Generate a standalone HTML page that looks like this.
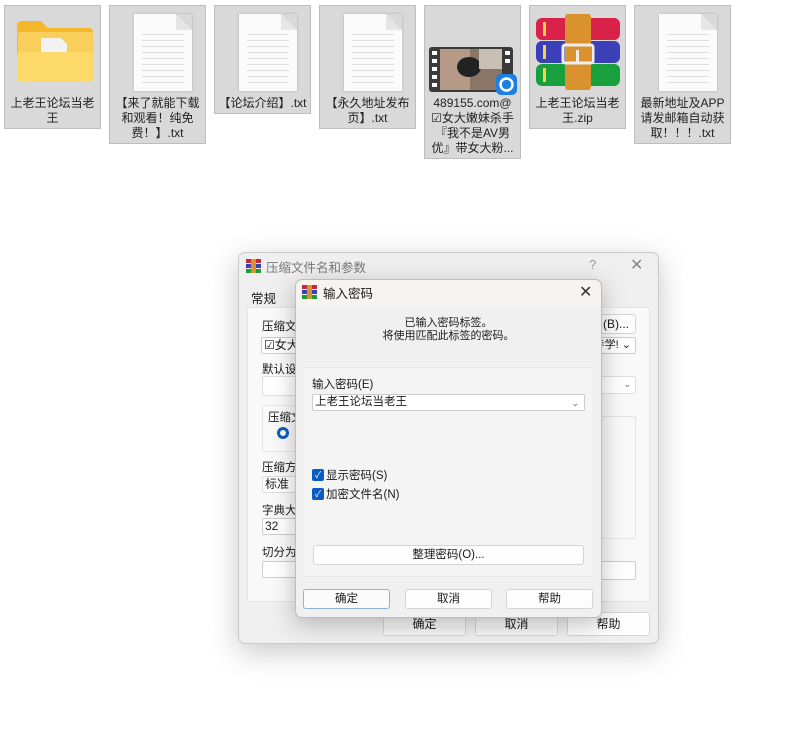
<!DOCTYPE html>
<html><head><meta charset="utf-8">
<style>
*{box-sizing:border-box;margin:0;padding:0}
body{width:800px;height:733px;background:#fff;position:relative;overflow:hidden;font-family:"Liberation Sans","Microsoft YaHei","Noto Sans CJK SC",sans-serif;font-size:12px;color:#1a1a1a}
.a{position:absolute}
.tile{position:absolute;top:5px;width:97px;background:#d9d9d9;border:1px solid #bdbdbd}
.tile .t{position:absolute;top:90px;left:0;width:95px;text-align:center;line-height:15px;font-size:12px;color:#222}
.doc{position:absolute;left:24px;top:8px;width:58px;height:77px;background:#fbfbfb;box-shadow:0 0 2px #aaa}
.doc:before{content:"";position:absolute;right:0;top:0;border-style:solid;border-width:0 16px 16px 0;border-color:#d9d9d9 #d9d9d9 #e6e6e6 #d9d9d9}
.doc i{position:absolute;left:8px;right:8px;height:1px;background:#ddd}
.btn{position:absolute;background:#fdfdfd;border:1px solid #d5d5d5;border-radius:3px;text-align:center;font-size:12px}
.box{position:absolute;background:#fff;border:1px solid #ccc;border-radius:2px}
.lbl{position:absolute;font-size:11.5px;color:#1a1a1a}
.chev{position:absolute;font-size:9px;color:#666}
</style></head><body>

<div class="tile" style="left:4px;height:124px">
 <svg class="a" style="left:10px;top:12px" width="80" height="66" viewBox="0 0 80 66">
  <path d="M2 8 Q2 3 7 3 H26 L33 10 H74 Q78 10 78 15 V60 Q78 64 74 64 H6 Q2 64 2 60Z" fill="#f5b82a"/>
  <rect x="3" y="14" width="75" height="40" rx="3" fill="#f9cf5c"/>
  <path d="M26 20 H46 L52 26 V44 H26Z" fill="#f2f2f2"/>
  <rect x="2" y="34" width="76" height="30" rx="3" fill="#fcd968"/>
 </svg>
 <div class="t">上老王论坛当老<br>王</div>
</div>
<div class="tile" style="left:109px;height:139px"><div class="doc"><i style="top:20px"></i><i style="top:26px"></i><i style="top:32px"></i><i style="top:38px"></i><i style="top:44px"></i><i style="top:50px"></i><i style="top:56px"></i><i style="top:62px"></i><i style="top:68px"></i></div>
 <div class="t">【来了就能下载<br>和观看！纯免<br>费！】.txt</div></div>
<div class="tile" style="left:214px;height:109px"><div class="doc"><i style="top:20px"></i><i style="top:26px"></i><i style="top:32px"></i><i style="top:38px"></i><i style="top:44px"></i><i style="top:50px"></i><i style="top:56px"></i><i style="top:62px"></i><i style="top:68px"></i></div>
 <div class="t">【论坛介绍】.txt</div></div>
<div class="tile" style="left:319px;height:124px"><div class="doc"><i style="top:20px"></i><i style="top:26px"></i><i style="top:32px"></i><i style="top:38px"></i><i style="top:44px"></i><i style="top:50px"></i><i style="top:56px"></i><i style="top:62px"></i><i style="top:68px"></i></div>
 <div class="t">【永久地址发布<br>页】.txt</div></div>
<div class="tile" style="left:424px;height:154px">
 <svg class="a" style="left:4px;top:36px" width="88" height="54" viewBox="0 0 88 54">
  <rect x="0" y="5" width="84" height="45" rx="3" fill="#3a3a3a"/>
  <rect x="11" y="7" width="62" height="41" fill="#8a7566"/>
  <rect x="11" y="7" width="30" height="41" fill="#b69a88"/>
  <ellipse cx="40" cy="25" rx="12" ry="10" fill="#222"/>
  <rect x="50" y="7" width="23" height="20" fill="#c9c0b5"/>
  <g fill="#fff"><rect x="3" y="9" width="5" height="4"/><rect x="3" y="17" width="5" height="4"/><rect x="3" y="25" width="5" height="4"/><rect x="3" y="33" width="5" height="4"/><rect x="3" y="41" width="5" height="4"/><rect x="76" y="9" width="5" height="4"/><rect x="76" y="17" width="5" height="4"/></g>
  <rect x="67" y="32" width="21" height="21" rx="5" fill="#1d7fe6"/>
  <circle cx="77.5" cy="42.5" r="6" fill="none" stroke="#fff" stroke-width="2.5"/>
 </svg>
 <div class="t">489155.com@<br>☑女大嫩妹杀手<br>『我不是AV男<br>优』带女大粉...</div></div>
<div class="tile" style="left:529px;height:124px">
 <svg class="a" style="left:5px;top:8px" width="86" height="76" viewBox="0 0 86 76">
  <rect x="1" y="4" width="84" height="22" rx="6" fill="#d8224a"/>
  <rect x="1" y="27" width="84" height="22" rx="6" fill="#3b3fb8"/>
  <rect x="1" y="50" width="84" height="22" rx="6" fill="#18a03c"/>
  <rect x="8" y="8" width="3" height="14" fill="#f5d24a"/><rect x="8" y="31" width="3" height="14" fill="#f5d24a"/><rect x="8" y="54" width="3" height="14" fill="#f5d24a"/>
  <rect x="30" y="0" width="26" height="76" rx="3" fill="#d9922e"/>
  <rect x="28" y="31" width="30" height="18" rx="2" fill="none" stroke="#eee" stroke-width="3"/>
  <rect x="41" y="36" width="3" height="13" fill="#eee"/>
 </svg>
 <div class="t">上老王论坛当老<br>王.zip</div></div>
<div class="tile" style="left:634px;height:139px"><div class="doc"><i style="top:20px"></i><i style="top:26px"></i><i style="top:32px"></i><i style="top:38px"></i><i style="top:44px"></i><i style="top:50px"></i><i style="top:56px"></i><i style="top:62px"></i><i style="top:68px"></i></div>
 <div class="t">最新地址及APP<br>请发邮箱自动获<br>取！！！.txt</div></div>

<div class="a" style="left:238px;top:252px;width:421px;height:392px;background:#efefef;border:1px solid #c9c9c9;border-radius:7px;box-shadow:0 8px 30px rgba(0,0,0,.22)"></div>
<svg class="a" style="left:246px;top:259px" width="15" height="14"><rect width="15" height="4" fill="#c8283c"/><rect y="5" width="15" height="4" fill="#3a40b0"/><rect y="10" width="15" height="4" fill="#1c9a3c"/><rect x="5" width="5" height="14" fill="#d9922e"/></svg>
<div class="lbl" style="left:266px;top:257px;font-size:12.5px;color:#777">压缩文件名和参数</div>
<div class="lbl" style="left:589px;top:257px;color:#999;font-size:13px">?</div>
<div class="lbl" style="left:630px;top:255px;color:#888;font-size:16px">✕</div>
<div class="lbl" style="left:251px;top:288px;font-size:12.5px">常规</div>
<div class="a" style="left:247px;top:307px;width:403px;height:295px;background:#f9f9f9;border:1px solid #e4e4e4;border-radius:3px"></div>
<div class="lbl" style="left:262px;top:318px">压缩文</div>
<div class="box" style="left:261px;top:337px;width:40px;height:17px;padding-left:2px;line-height:15px">☑女大</div>
<div class="lbl" style="left:262px;top:361px">默认设</div>
<div class="box" style="left:262px;top:376px;width:40px;height:20px;border-color:#ddd"></div>
<div class="a" style="left:262px;top:405px;width:40px;height:47px;border:1px solid #e6e6e6;border-radius:3px"></div>
<div class="lbl" style="left:268px;top:409px">压缩文</div>
<div class="a" style="left:277px;top:427px;width:12px;height:12px;border-radius:50%;border:3.5px solid #0c5fb8;background:#fff"></div>
<div class="lbl" style="left:262px;top:459px">压缩方</div>
<div class="box" style="left:262px;top:476px;width:40px;height:17px;padding-left:2px;line-height:15px;border-color:#ddd">标准</div>
<div class="lbl" style="left:262px;top:502px">字典大</div>
<div class="box" style="left:262px;top:518px;width:40px;height:17px;padding-left:2px;line-height:15px">32</div>
<div class="lbl" style="left:262px;top:544px">切分为</div>
<div class="box" style="left:262px;top:561px;width:40px;height:17px"></div>
<div class="btn" style="left:585px;top:314px;width:51px;height:20px;line-height:18px;text-align:right;padding-right:6px">(B)...</div>
<div class="box" style="left:585px;top:337px;width:51px;height:17px;line-height:15px;text-align:right;padding-right:4px;font-size:11px">寺学! ⌄</div>
<div class="box" style="left:585px;top:376px;width:51px;height:18px;border-color:#ddd"><span class="chev" style="right:4px;top:2px">⌄</span></div>
<div class="a" style="left:590px;top:416px;width:46px;height:123px;border:1px solid #e4e4e4;border-radius:2px"></div>
<div class="box" style="left:585px;top:561px;width:51px;height:19px"></div>
<div class="btn" style="left:383px;top:612px;width:83px;height:24px;line-height:22px;background:#f7f7f7">确定</div>
<div class="btn" style="left:475px;top:612px;width:83px;height:24px;line-height:22px;background:#f7f7f7">取消</div>
<div class="btn" style="left:567px;top:612px;width:83px;height:24px;line-height:22px;background:#fdfdfd">帮助</div>

<div class="a" style="left:295px;top:279px;width:307px;height:339px;background:#f0f0f0;border:1px solid #bdbdbd;border-radius:7px;box-shadow:0 6px 24px rgba(0,0,0,.25)"></div>
<div class="a" style="left:296px;top:280px;width:305px;height:26px;background:#f7f3f1;border-radius:7px 7px 0 0"></div>
<svg class="a" style="left:302px;top:285px" width="15" height="14"><rect width="15" height="4" fill="#c8283c"/><rect y="5" width="15" height="4" fill="#3a40b0"/><rect y="10" width="15" height="4" fill="#1c9a3c"/><rect x="5" width="5" height="14" fill="#d9922e"/></svg>
<div class="lbl" style="left:323px;top:283px;font-size:12.5px">输入密码</div>
<div class="lbl" style="left:579px;top:282px;font-size:16px;color:#333">✕</div>
<div class="lbl" style="left:296px;top:317px;width:305px;text-align:center;font-size:11px;line-height:13px">已输入密码标签。<br>将使用匹配此标签的密码。</div>
<div class="a" style="left:302px;top:367px;width:292px;height:210px;background:#f4f4f4;border:1px solid #e8e8e8;border-radius:2px"></div>
<div class="lbl" style="left:312px;top:376px;font-size:11.5px">输入密码(E)</div>
<div class="box" style="left:312px;top:394px;width:273px;height:17px;padding-left:2px;line-height:15px;font-size:11.5px">上老王论坛当老王<span class="chev" style="right:5px;top:1px">⌄</span></div>
<div class="a" style="left:312px;top:469px;width:12px;height:12px;background:#0a5cc0;border-radius:2px;color:#fff;font-size:9px;text-align:center;line-height:12px">✓</div>
<div class="lbl" style="left:326px;top:467px;font-size:11.5px">显示密码(S)</div>
<div class="a" style="left:312px;top:488px;width:12px;height:12px;background:#0a5cc0;border-radius:2px;color:#fff;font-size:9px;text-align:center;line-height:12px">✓</div>
<div class="lbl" style="left:326px;top:486px;font-size:11.5px">加密文件名(N)</div>
<div class="btn" style="left:313px;top:545px;width:271px;height:20px;line-height:18px;font-size:11.5px">整理密码(O)...</div>
<div class="btn" style="left:303px;top:589px;width:87px;height:20px;line-height:18px;font-size:11.5px;border-color:#8fb4dc;background:#fbfbfb">确定</div>
<div class="btn" style="left:405px;top:589px;width:87px;height:20px;line-height:18px;font-size:11.5px">取消</div>
<div class="btn" style="left:506px;top:589px;width:87px;height:20px;line-height:18px;font-size:11.5px">帮助</div>
</body></html>
